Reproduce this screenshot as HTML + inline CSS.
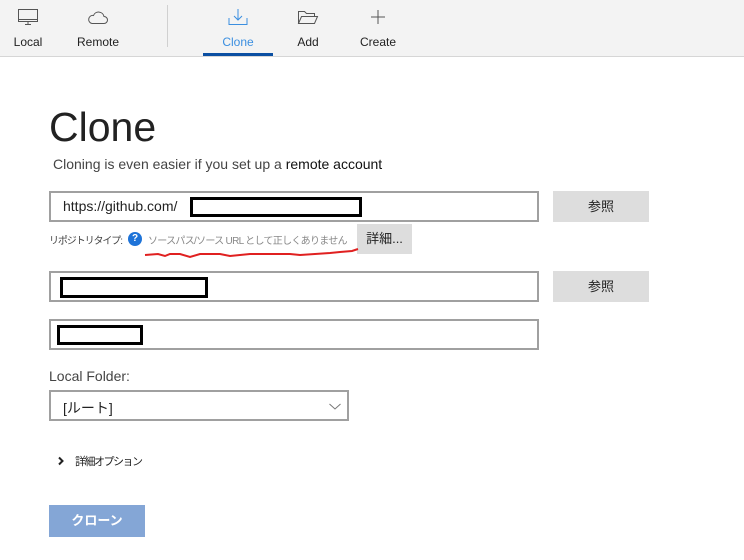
<!DOCTYPE html>
<html><head><meta charset="utf-8"><style>
*{margin:0;padding:0;box-sizing:border-box}
body{width:744px;height:560px;background:#fff;font-family:"Liberation Sans","Noto Sans CJK JP",sans-serif;position:relative;overflow:hidden;color:#222}
.tb{position:absolute;left:0;top:0;width:744px;height:57px;background:#f3f3f3;border-bottom:1px solid #d6d6d6}
.it{position:absolute;top:0;text-align:center;font-size:12px;color:#222}
.it svg{position:absolute;top:8px}
.it span{position:absolute;top:35px;left:0;width:100%}
.a{position:absolute;white-space:nowrap}
.inp{position:absolute;border:2px solid #a0a0a0;background:#fff;height:31px}
.btn{position:absolute;background:#ddd;font-size:13px;text-align:center;line-height:31px;color:#222}
.blk{position:absolute;background:#fff;border:3px solid #000}
</style></head><body>
<div class="tb">
 <div class="it" style="left:0;width:56px"><svg style="left:17px" width="22" height="18" viewBox="0 0 22 18" fill="none" stroke="#555" stroke-width="1"><rect x="1.5" y="1.5" width="19" height="12"/><path d="M1.5 11.5h19M8 16.5h6M11 13.5v3"/></svg><span>Local</span></div>
 <div class="it" style="left:70px;width:56px"><svg style="left:17px" width="22" height="18" viewBox="0 0 22 18" fill="none" stroke="#555" stroke-width="1"><path d="M5 15.5h12a3.5 3.5 0 0 0 0-7 5.5 5.5 0 0 0-10.5-1A4 4 0 0 0 5 15.5z"/></svg><span>Remote</span></div>
 <div class="a" style="left:167px;top:5px;width:1px;height:42px;background:#d0d0d0"></div>
 <div class="it" style="left:203px;width:70px"><svg style="left:24px" width="22" height="18" viewBox="0 0 22 18" fill="none" stroke="#3b8fe0" stroke-width="1"><path d="M11 1v11M7 8l4 4 4-4M2 10v6.5h18V10"/></svg><span style="color:#3b8fe0">Clone</span></div>
 <div class="a" style="left:203px;top:53px;width:70px;height:3px;background:#0b4fa2"></div>
 <div class="it" style="left:280px;width:56px"><svg style="left:17px" width="22" height="18" viewBox="0 0 22 18" fill="none" stroke="#555" stroke-width="1"><path d="M1.5 15.5V3.5h6l2 2h8v3M1.5 15.5l3-7h16l-3 7z"/></svg><span>Add</span></div>
 <div class="it" style="left:350px;width:56px"><svg style="left:17px" width="22" height="18" viewBox="0 0 22 18" fill="none" stroke="#555" stroke-width="1"><path d="M11 2v14M4 9h14"/></svg><span>Create</span></div>
</div>
<div class="a" style="left:49px;top:104px;font-size:41px;color:#222">Clone</div>
<div class="a" style="left:53px;top:156px;font-size:14px;color:#444">Cloning is even easier if you set up a <span style="color:#111">remote account</span></div>
<div class="inp" style="left:49px;top:191px;width:490px"><span class="a" style="left:12px;top:5px;font-size:14px">https://github.com/</span></div>
<div class="blk" style="left:190px;top:197px;width:172px;height:20px"></div>
<div class="btn" style="left:553px;top:191px;width:96px">参照</div>
<div class="a" style="left:49px;top:232px;font-size:10px;color:#444;letter-spacing:-1.1px">リポジトリタイプ:</div>
<div class="a" style="left:128px;top:232px;width:14px;height:14px;border-radius:50%;background:#1e73d8;color:#fff;font-size:10px;text-align:center;line-height:14px;font-weight:bold">?</div>
<div class="a" style="left:148px;top:232px;font-size:10px;color:#888;letter-spacing:-0.7px">ソースパス/ソース URL として正しくありません</div>
<div class="btn" style="left:357px;top:224px;width:55px;height:30px;line-height:30px">詳細...</div>
<svg class="a" style="left:140px;top:246px" width="220" height="14"><path d="M5 9 L18 8 L25 10 L30 8 L40 8 L50 11 L60 8 L80 8 L90 10 L110 8 L150 8 L160 9 L190 7 L200 6 L212 5 L218 3" fill="none" stroke="#e02020" stroke-width="2"/></svg>
<div class="inp" style="left:49px;top:271px;width:490px"></div>
<div class="blk" style="left:60px;top:277px;width:148px;height:21px"></div>
<div class="btn" style="left:553px;top:271px;width:96px">参照</div>
<div class="inp" style="left:49px;top:319px;width:490px"></div>
<div class="blk" style="left:57px;top:325px;width:86px;height:20px"></div>
<div class="a" style="left:49px;top:368px;font-size:14px;color:#444">Local Folder:</div>
<div class="inp" style="left:49px;top:390px;width:300px"><span class="a" style="left:12px;top:6px;font-size:14px">[ルート]</span><svg class="a" style="left:278px;top:11px" width="12" height="8"><path d="M0.5 1l5.5 5 5.5-5" fill="none" stroke="#777"/></svg></div>
<svg class="a" style="left:57px;top:456px" width="8" height="10"><path d="M2 1.5l3.5 3.5-3.5 3.5" fill="none" stroke="#222" stroke-width="2"/></svg>
<div class="a" style="left:75px;top:453px;font-size:11px;color:#222;letter-spacing:-1.5px">詳細オプション</div>
<div class="a" style="left:49px;top:505px;width:96px;height:32px;background:#84a6d6;color:#fff;font-size:13px;text-align:center;line-height:32px;font-weight:bold">クローン</div>
</body></html>
